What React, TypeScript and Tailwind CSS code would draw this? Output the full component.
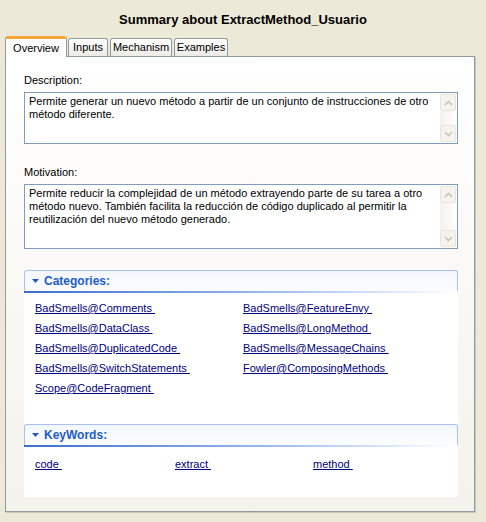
import React from "react";

const FONT = { fontFamily: '"Liberation Sans", Arial, sans-serif' };

const TABS = [
  { label: "Overview", cls: "w-[62px]" },
  { label: "Inputs", cls: "ml-[1px] w-[40px]" },
  { label: "Mechanism", cls: "ml-[2px] w-[62px]" },
  { label: "Examples", cls: "ml-[2px] w-[54px]" },
];

const CATEGORIES = [
  "BadSmells@Comments",
  "BadSmells@FeatureEnvy",
  "BadSmells@DataClass",
  "BadSmells@LongMethod",
  "BadSmells@DuplicatedCode",
  "BadSmells@MessageChains",
  "BadSmells@SwitchStatements",
  "Fowler@ComposingMethods",
  "Scope@CodeFragment",
];

const KEYWORDS = ["code", "extract", "method"];

function Chevron({ up }: { up?: boolean }) {
  return (
    <svg width="9" height="6" viewBox="0 0 9 6">
      <path
        d={up ? "M1 5 L4.5 1.5 L8 5" : "M1 1 L4.5 4.5 L8 1"}
        fill="none"
        stroke="#c9c7ba"
        strokeWidth="1.6"
      />
    </svg>
  );
}

// disabled XP-style vertical scrollbar
function ScrollBar() {
  return (
    <div className="flex w-[17px] flex-col bg-[#fcfcf9] py-[1px] pr-[1px]">
      <div className="flex h-[17px] items-center justify-center rounded-[2px] border border-[#e8e6dc] bg-[#f4f3ee]">
        <Chevron up />
      </div>
      <div className="flex-1 bg-gradient-to-r from-[#f3f1ec] to-[#fefefb]" />
      <div className="flex h-[17px] items-center justify-center rounded-[2px] border border-[#e8e6dc] bg-[#f4f3ee]">
        <Chevron />
      </div>
    </div>
  );
}

function TextBox({ lines, height }: { lines: string[]; height: string }) {
  return (
    <div className={`flex border border-[#7f9db9] bg-white ${height}`}>
      <div className="flex-1 px-[4px] pt-[2px] text-[11px] leading-[13px] text-black">
        {lines.map((l) => (
          <div key={l}>{l}</div>
        ))}
      </div>
      <ScrollBar />
    </div>
  );
}

function SectionHeader({ title }: { title: string }) {
  return (
    <div className="relative h-[23px]">
      <div className="absolute inset-x-0 top-0 h-[21px] rounded-t-[3px] border border-b-0 border-[#a9c1f1] bg-gradient-to-b from-[#f4f7fe] to-[#fbfcff]">
        <div className="flex h-full items-center pl-[7px]">
          <svg width="7" height="4" viewBox="0 0 7 4" className="mr-[5px]">
            <path d="M0 0 H7 L3.5 4 Z" fill="#215dc6" />
          </svg>
          <span className="text-[12px] font-bold leading-[14px] text-[#215dc6]">{title}</span>
        </div>
      </div>
      <div className="absolute inset-x-0 bottom-0 h-[2px] bg-gradient-to-r from-[#3c6ccc] via-[#8fb0ea] to-white" />
    </div>
  );
}

function Link({ children }: { children: string }) {
  return (
    <div className="text-[11px] leading-[13px]">
      <span className="whitespace-pre text-[#000080] underline decoration-[#000080] underline-offset-[1px]">
        {children + " "}
      </span>
    </div>
  );
}

export default function App() {
  return (
    <div style={FONT} className="h-[522px] w-[486px] overflow-hidden bg-[#ece9d8] text-black">
      <div className="pt-[12px] text-center text-[13px] font-bold leading-[16px]">
        Summary about ExtractMethod_Usuario
      </div>

      {/* tab strip */}
      <div className="mt-[8px] flex items-end pl-[5px]">
        {TABS.map((t, i) =>
          i === 0 ? (
            <div
              key={t.label}
              className={`relative z-10 -mb-[1px] flex h-[21px] items-start justify-center rounded-t-[3px] border-x border-t-[3px] border-x-[#919b9c] border-t-[#f7a535] bg-white pt-[1px] text-[11px] ${t.cls}`}
            >
              {t.label}
            </div>
          ) : (
            <div
              key={t.label}
              className={`flex h-[18px] items-center justify-center rounded-t-[3px] border border-b-0 border-[#919b9c] bg-gradient-to-b from-white to-[#ecebe5] text-[11px] ${t.cls}`}
            >
              {t.label}
            </div>
          ),
        )}
      </div>

      {/* tab page */}
      <div className="ml-[5px] h-[456px] w-[470px] border border-[#919b9c] bg-gradient-to-b from-white to-[#f4f2ec] shadow-[1px_1px_0_#c9c7ba]">
        <div className="ml-[18px] w-[434px] pt-[17px]">
          <div className="text-[11px] leading-[13px]">Description:</div>
          <div className="mt-[5px]">
            <TextBox
              height="h-[52px]"
              lines={[
                "Permite generar un nuevo método a partir de un conjunto de instrucciones de otro",
                "método diferente.",
              ]}
            />
          </div>

          <div className="mt-[22px] text-[11px] leading-[13px]">Motivation:</div>
          <div className="mt-[5px]">
            <TextBox
              height="h-[65px]"
              lines={[
                "Permite reducir la complejidad de un método extrayendo parte de su tarea a otro",
                "método nuevo. También facilita la reducción de código duplicado al permitir la",
                "reutilización del nuevo método generado.",
              ]}
            />
          </div>

          <div className="mt-[21px] h-[227px] bg-white">
            <SectionHeader title="Categories:" />
            <div className="grid grid-cols-[208px_1fr] gap-y-[7px] pl-[11px] pt-[9px]">
              {CATEGORIES.map((c) => (
                <Link key={c}>{c}</Link>
              ))}
            </div>

            <div className="mt-[29px]">
              <SectionHeader title="KeyWords:" />
              <div className="grid grid-cols-[140px_138px_1fr] pl-[11px] pt-[11px]">
                {KEYWORDS.map((k) => (
                  <Link key={k}>{k}</Link>
                ))}
              </div>
            </div>
          </div>
        </div>
      </div>
    </div>
  );
}
